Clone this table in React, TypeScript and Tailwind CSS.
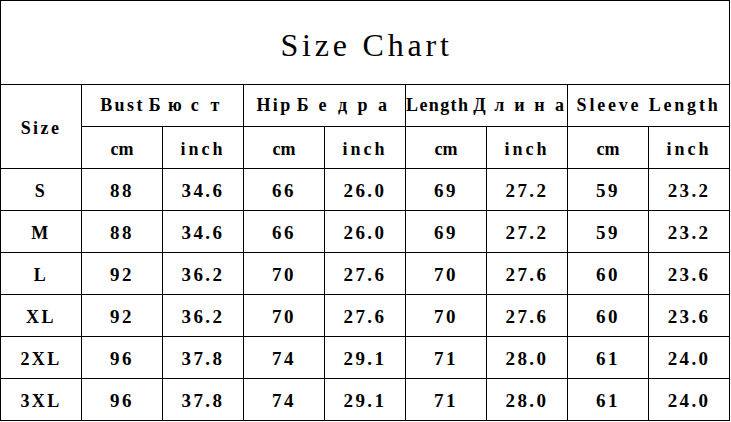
const rows = [
  ['S', '88', '34.6', '66', '26.0', '69', '27.2', '59', '23.2'],
  ['M', '88', '34.6', '66', '26.0', '69', '27.2', '59', '23.2'],
  ['L', '92', '36.2', '70', '27.6', '70', '27.6', '60', '23.6'],
  ['XL', '92', '36.2', '70', '27.6', '70', '27.6', '60', '23.6'],
  ['2XL', '96', '37.8', '74', '29.1', '71', '28.0', '61', '24.0'],
  ['3XL', '96', '37.8', '74', '29.1', '71', '28.0', '61', '24.0'],
];

// cyrillic in the source is set full-width, so every letter gets its own 20px box
function Wide({ text }: { text: string }) {
  return (
    <>
      {text.split('').map((ch, i) => (
        <span key={i} className="inline-block w-[20px] text-center tracking-normal">
          {ch}
        </span>
      ))}
    </>
  );
}

const cell = 'border border-black text-center align-middle p-0';

export default function App() {
  return (
    <div className="w-[731px] h-[422px] bg-white text-black font-['Liberation_Serif',serif]">
      <table className="table-fixed border-collapse w-[730px]">
        <colgroup>
          {Array.from({ length: 9 }).map((_, i) => (
            <col key={i} className="w-[81px]" />
          ))}
        </colgroup>
        <tbody>
          <tr className="h-[84px]">
            <td colSpan={9} className={`${cell} text-[32px] tracking-[3.8px] pt-[4px] pl-[3px]`}>
              Size Chart
            </td>
          </tr>
          <tr className="h-[42px] text-[18px] font-bold tracking-[2.4px]">
            <td rowSpan={2} className={`${cell} pt-[3px]`}>
              Size
            </td>
            <td colSpan={2} className={`${cell} whitespace-nowrap`}>
              Bust<Wide text="Бюст" />
            </td>
            <td colSpan={2} className={`${cell} whitespace-nowrap`}>
              Hip<Wide text="Бедра" />
            </td>
            <td colSpan={2} className={`${cell} whitespace-nowrap tracking-[1.4px]`}>
              Length<Wide text="Длина" />
            </td>
            <td colSpan={2} className={`${cell} whitespace-nowrap tracking-[2.8px]`}>
              Sleeve Length
            </td>
          </tr>
          <tr className="h-[42px] text-[18px] font-bold">
            {['cm', 'inch', 'cm', 'inch', 'cm', 'inch', 'cm', 'inch'].map((u, i) => (
              <td key={i} className={`${cell} pt-[3px] ${u === 'cm' ? 'tracking-normal' : 'tracking-[3px]'}`}>
                {u}
              </td>
            ))}
          </tr>
          {rows.map((r) => (
            <tr key={r[0]} className="h-[42px] text-[19px] font-bold tracking-[2.4px]">
              {r.map((v, i) => (
                <td key={i} className={`${cell} pt-[3px] ${i === 0 ? 'text-[18px]' : ''}`}>
                  {v}
                </td>
              ))}
            </tr>
          ))}
        </tbody>
      </table>
    </div>
  );
}
